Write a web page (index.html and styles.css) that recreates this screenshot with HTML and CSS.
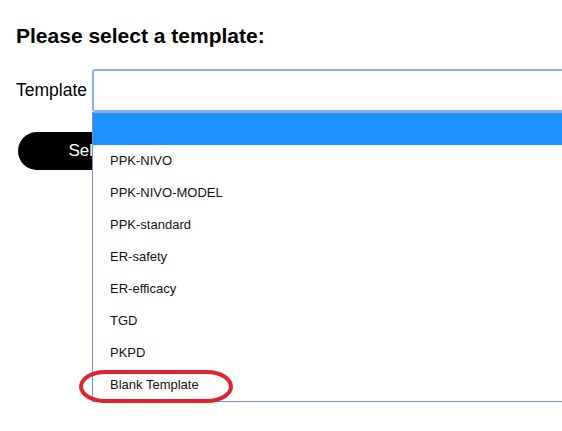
FILE: index.html
```html
<!DOCTYPE html>
<html>
<head>
<meta charset="utf-8">
<link rel="stylesheet" href="styles.css">
</head>
<body>
<div class="page">
  <h1 class="title">Please select a template:</h1>
  <div class="field-row">
    <label class="label">Template</label>
    <div class="select-wrap">
      <div class="select-box"></div>
      <ul class="dropdown">
        <li class="item item-first active"></li>
        <li class="item">PPK-NIVO</li>
        <li class="item">PPK-NIVO-MODEL</li>
        <li class="item">PPK-standard</li>
        <li class="item">ER-safety</li>
        <li class="item">ER-efficacy</li>
        <li class="item">TGD</li>
        <li class="item">PKPD</li>
        <li class="item item-marked">Blank Template<span class="circle"></span></li>
      </ul>
    </div>
  </div>
  <button class="btn">Select</button>
</div>
</body>
</html>
```
FILE: styles.css
```css
html, body {
  margin: 0;
  padding: 0;
  background: #fff;
  overflow: hidden;
}
body {
  font-family: "Liberation Sans", Arial, sans-serif;
  color: #000;
  width: 562px;
  height: 431px;
}
.page {
  padding: 0 0 0 16px;
}
.title {
  font-size: 21px;
  font-weight: bold;
  margin: 0;
  padding-top: 24px;
  line-height: 24px;
}
.field-row {
  display: flex;
  align-items: center;
  gap: 5px;
  margin-top: 21px;
}
.label {
  font-size: 17.5px;
  color: #000;
  white-space: nowrap;
}
.select-wrap {
  position: relative;
  flex: 1;
  min-width: 0;
}
.select-box {
  height: 39px;
  border: 2px solid #8cb1f2;
  border-right: none;
  border-radius: 3px 0 0 3px;
  background: #fff;
}
.dropdown {
  position: absolute;
  left: 0;
  right: 0;
  top: 43px;
  margin: 0;
  padding: 0;
  list-style: none;
  border-left: 1px solid #7393d5;
  border-bottom: 1px solid #7393d5;
  background: #fff;
  z-index: 2;
}
.item {
  position: relative;
  height: 32px;
  line-height: 32px;
  padding-left: 17px;
  font-size: 13px;
  color: #111;
}
.item-first {
  height: 33px;
  border-top: 1px solid #9aa9c4;
  box-sizing: border-box;
}
.active {
  background: #1e90ff;
}
.circle {
  position: absolute;
  left: -14px;
  top: 1px;
  width: 154px;
  height: 33px;
  box-sizing: border-box;
  border: 4px solid #e2212c;
  border-radius: 26px / 50%;
}
.btn {
  display: block;
  margin: 20px 0 0 2px;
  width: 148px;
  height: 38px;
  border: none;
  border-radius: 19px;
  background: #000;
  color: #fff;
  font-family: "Liberation Sans", Arial, sans-serif;
  font-size: 17px;
  padding: 0;
}
```
